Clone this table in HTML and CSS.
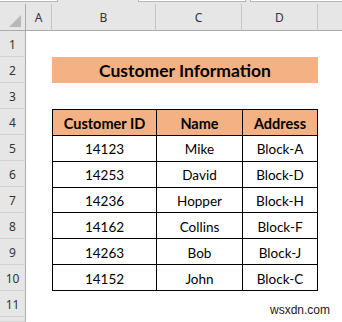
FILE: index.html
```html
<!DOCTYPE html>
<html>
<head>
<meta charset="utf-8">
<link rel="stylesheet" href="styles.css">
</head>
<body>
<div class="topbar">
  <div class="tb tb1"></div>
  <div class="tb tb2"></div>
  <div class="tb tb3"></div>
</div>
<div class="sheet">
  <div class="ch corner"><span class="tri"></span></div>
  <div class="ch">A</div>
  <div class="ch">B</div>
  <div class="ch">C</div>
  <div class="ch">D</div>
  <div class="ch last"></div>

  <div class="rh">1</div>
  <div class="rh">2</div>
  <div class="rh">3</div>
  <div class="rh">4</div>
  <div class="rh">5</div>
  <div class="rh">6</div>
  <div class="rh">7</div>
  <div class="rh">8</div>
  <div class="rh">9</div>
  <div class="rh">10</div>
  <div class="rh">11</div>
  <div class="rh"></div>

  <div class="title">Customer Information</div>

  <div class="table">
    <div class="cell head">Customer ID</div>
    <div class="cell head">Name</div>
    <div class="cell head">Address</div>

    <div class="cell">14123</div><div class="cell">Mike</div><div class="cell">Block-A</div>
    <div class="cell">14253</div><div class="cell">David</div><div class="cell">Block-D</div>
    <div class="cell">14236</div><div class="cell">Hopper</div><div class="cell">Block-H</div>
    <div class="cell">14162</div><div class="cell">Collins</div><div class="cell">Block-F</div>
    <div class="cell">14263</div><div class="cell">Bob</div><div class="cell">Block-J</div>
    <div class="cell">14152</div><div class="cell">John</div><div class="cell">Block-C</div>
  </div>
</div>
<div class="watermark">wsxdn.com</div>
</body>
</html>
```

FILE: styles.css
```css
* { box-sizing: border-box; }
html, body {
  margin: 0;
  padding: 0;
  width: 342px;
  height: 322px;
  overflow: hidden;
  background: #ffffff;
  font-family: Lato, "Open Sans", sans-serif;
  position: relative;
}
.topbar {
  height: 4px;
  display: flex;
  background: #e6e6e6;
}
.tb {
  height: 2px;
  background: #ffffff;
  border-bottom: 1px solid #b5b5b5;
  border-right: 1px solid #b5b5b5;
}
.tb1 { width: 58px; }
.tb2 { width: 108px; margin-left: 80px; border-left: 1px solid #b5b5b5; }
.tb3 { flex: 1; margin-left: 4px; border-left: 1px solid #b5b5b5; border-right: none; }

.sheet {
  display: grid;
  grid-template-columns: 26px 26px 104px 86px 76px 24px;
  grid-template-rows: 27px repeat(11, 26px) 5px;
}
.ch {
  background: #e6e6e6;
  border-right: 1px solid #c6c6c6;
  border-bottom: 1px solid #ababab;
  display: flex;
  align-items: center;
  justify-content: center;
  font-family: "Noto Sans", sans-serif;
  font-size: 12px;
  color: #333333;
  padding-top: 1px;
}
.ch.corner {
  border-right: 1px solid #ababab;
  position: relative;
}
.ch.last { border-right: none; }
.tri {
  position: absolute;
  right: 4px;
  bottom: 3px;
  width: 12px;
  height: 12px;
  background: #b8b8b8;
  clip-path: polygon(100% 0, 100% 100%, 0 100%);
}
.rh {
  grid-column: 1;
  background: #e6e6e6;
  border-right: 1px solid #ababab;
  border-bottom: 1px solid #d2d2d2;
  display: flex;
  align-items: center;
  justify-content: center;
  font-family: "Noto Sans", sans-serif;
  font-size: 12px;
  color: #333333;
  padding-top: 2px;
}
.title {
  grid-column: 3 / 6;
  grid-row: 3;
  background: #f4b183;
  display: flex;
  align-items: center;
  justify-content: center;
  font-weight: 700;
  font-size: 17.5px;
  color: #000000;
  padding-top: 1px;
}
.table {
  grid-column: 3 / 6;
  grid-row: 5 / 12;
  display: grid;
  grid-template-columns: 104px 86px 1fr;
  grid-template-rows: repeat(7, 1fr);
  border-top: 1px solid #000000;
  border-left: 1px solid #000000;
}
.cell {
  border-right: 1px solid #000000;
  border-bottom: 1px solid #000000;
  display: flex;
  align-items: center;
  justify-content: center;
  font-size: 13.5px;
  color: #000000;
  padding-top: 2px;
}
.cell.head {
  background: #f4b183;
  font-weight: 700;
  font-size: 14.5px;
}
.watermark {
  position: absolute;
  right: 12px;
  bottom: 5px;
  font-family: "Liberation Sans", Arial, sans-serif;
  font-size: 12px;
  color: #1a1a1a;
}
```
